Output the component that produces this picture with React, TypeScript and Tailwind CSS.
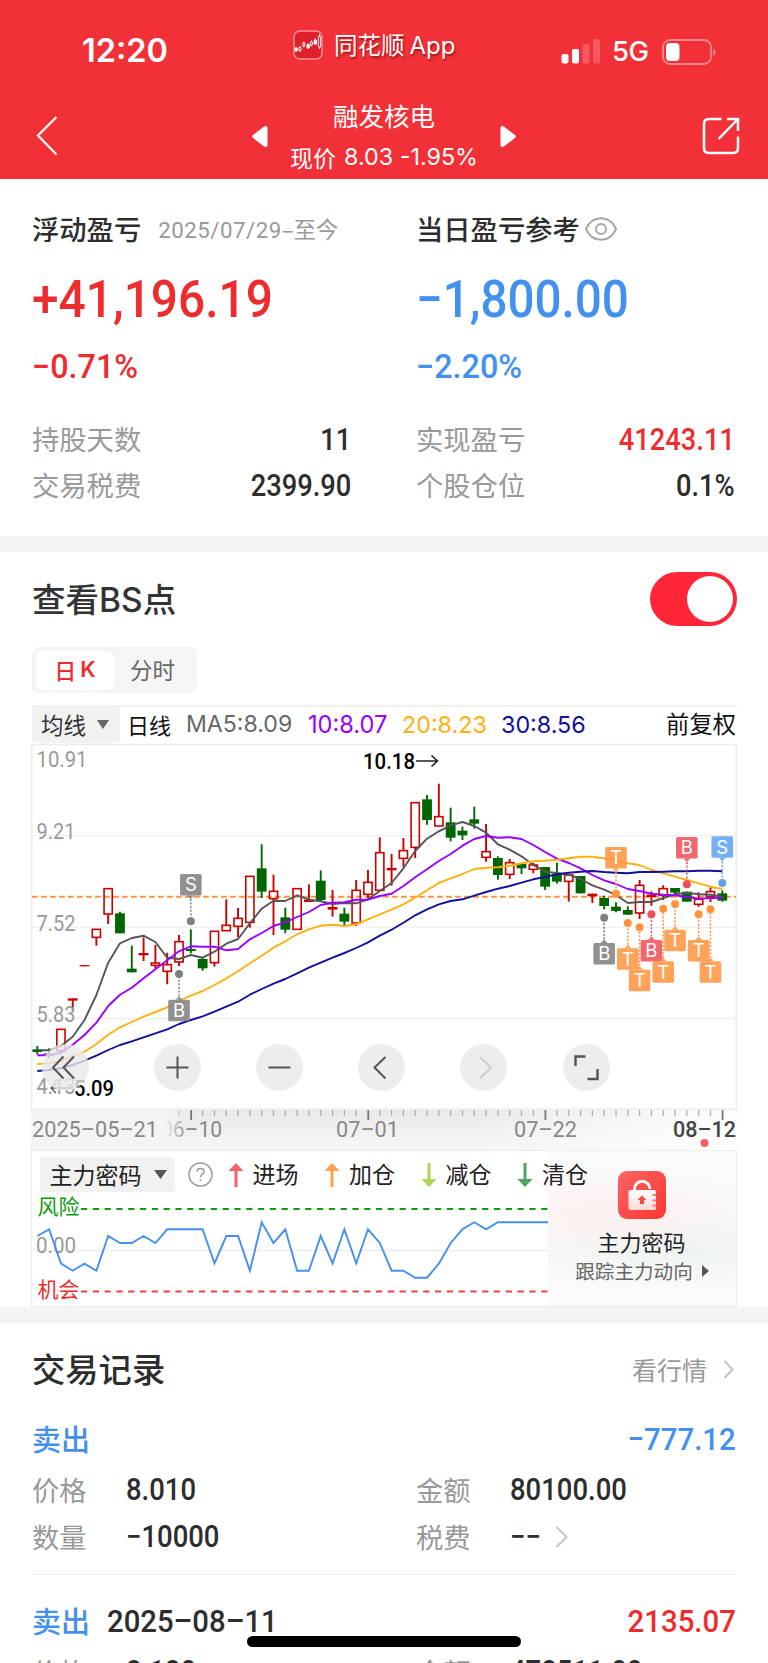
import React from "react";

type Kind = "up" | "down" | "flat";
// kind, high, body top, body bottom, low
type Candle = [Kind, number, number, number, number];

type Mark = { at: number; letter: string; box: number; dot: number; color: string };

const STEP = 11.81;
const cx = (i: number) => 6.3 + i * STEP;
const cy = (v: number) => v / 3 - 3;

const candles: Candle[] = [
  ["down", 918, 928, 936, 943], ["down", 925, 940, 948, 955], ["up", 868, 868, 932, 935],
  ["flat", 775, 775, 782, 812], ["flat", 675, 675, 679, 679], ["up", 568, 568, 592, 617],
  ["up", 446, 446, 522, 552], ["down", 515, 520, 580, 580], ["down", 617, 686, 697, 697],
  ["flat", 592, 639, 646, 663], ["up", 615, 669, 676, 685], ["up", 638, 674, 694, 733],
  ["up", 585, 605, 666, 678], ["down", 568, 627, 633, 640], ["down", 652, 657, 685, 692],
  ["up", 574, 574, 668, 680], ["up", 478, 556, 572, 572], ["up", 504, 535, 559, 592],
  ["up", 409, 409, 547, 563], ["down", 313, 385, 455, 474], ["up", 404, 454, 476, 585],
  ["down", 503, 532, 569, 580], ["up", 446, 446, 568, 568], ["flat", 433, 479, 486, 486],
  ["down", 391, 422, 480, 485], ["flat", 450, 501, 509, 530], ["down", 503, 521, 545, 557],
  ["up", 420, 451, 549, 558], ["up", 390, 427, 463, 475], ["up", 292, 338, 451, 451],
  ["flat", 342, 384, 391, 437], ["up", 294, 332, 355, 380], ["up", 188, 188, 322, 354],
  ["down", 165, 178, 240, 254], ["up", 131, 230, 258, 258], ["down", 203, 247, 293, 304],
  ["down", 260, 272, 286, 300], ["down", 200, 238, 251, 266], ["up", 252, 335, 352, 365],
  ["down", 349, 354, 405, 419], ["up", 357, 368, 403, 417], ["down", 369, 371, 385, 402],
  ["up", 368, 375, 388, 400], ["down", 381, 381, 440, 450], ["down", 368, 401, 425, 431],
  ["up", 405, 405, 424, 485], ["down", 408, 408, 460, 460], ["flat", 461, 461, 469, 489],
  ["down", 467, 474, 498, 508], ["down", 487, 500, 513, 517], ["down", 499, 510, 524, 524],
  ["up", 420, 436, 519, 537], ["flat", 454, 464, 471, 497], ["up", 436, 446, 466, 480],
  ["down", 444, 444, 458, 465], ["down", 455, 455, 485, 485], ["up", 457, 478, 493, 500],
  ["up", 442, 455, 470, 486], ["down", 451, 460, 482, 485],
];

const averages = [
  {
    color: "#555555",
    data: [931, 931, 918, 890, 840, 765, 668, 610, 594, 587, 606, 653, 657, 645, 653, 635, 611, 597, 550, 506, 482, 483, 466, 479, 484, 492, 489, 490, 478, 453, 429, 385, 333, 296, 274, 256, 246, 258, 278, 313, 329, 349, 375, 395, 399, 404, 417, 436, 449, 465, 489, 486, 486, 474, 463, 458, 463, 464, 470],
  },
  {
    color: "#9900ff",
    data: [946, 946, 938, 914, 885, 848, 798, 764, 743, 715, 688, 661, 634, 619, 620, 620, 631, 627, 598, 579, 558, 547, 531, 516, 495, 488, 487, 479, 479, 468, 461, 438, 412, 388, 363, 342, 317, 297, 288, 293, 292, 297, 315, 336, 356, 369, 385, 405, 421, 432, 447, 453, 461, 464, 466, 471, 476, 474, 474],
  },
  {
    color: "#ffb010",
    data: [972, 970, 962, 950, 935, 912, 884, 862, 846, 830, 816, 802, 783, 767, 753, 735, 715, 694, 670, 647, 623, 604, 583, 568, 557, 554, 558, 553, 538, 523, 509, 493, 473, 451, 429, 415, 402, 387, 383, 382, 377, 370, 364, 362, 359, 355, 350, 350, 355, 362, 370, 375, 390, 400, 410, 420, 430, 440, 447],
  },
  {
    color: "#10109c",
    data: [993, 990, 985, 975, 962, 947, 930, 915, 904, 892, 880, 868, 852, 840, 829, 815, 800, 785, 764, 747, 731, 717, 700, 683, 668, 653, 639, 624, 607, 587, 569, 548, 526, 508, 493, 483, 478, 467, 456, 446, 438, 428, 418, 411, 403, 398, 395, 393, 396, 398, 400, 396, 396, 395, 394, 394, 392, 392, 394],
  },
];

const marks: Mark[] = [
  { at: 13, letter: "S", box: 402, dot: 544, color: "#808080" },
  { at: 12, letter: "B", box: 779, dot: 702, color: "#808080" },
  { at: 49, letter: "T", box: 321, dot: 461, color: "#ff9440" },
  { at: 55, letter: "B", box: 291, dot: 433, color: "#ee4f58" },
  { at: 58, letter: "S", box: 289, dot: 429, color: "#60a2f0" },
  { at: 48, letter: "B", box: 609, dot: 533, color: "#808080" },
  { at: 50, letter: "T", box: 625, dot: 549, color: "#ff9440" },
  { at: 51, letter: "T", box: 689, dot: 562, color: "#ff9440" },
  { at: 52, letter: "B", box: 600, dot: 523, color: "#ee4f58" },
  { at: 53, letter: "T", box: 664, dot: 506, color: "#ff9440" },
  { at: 54, letter: "T", box: 569, dot: 492, color: "#ff9440" },
  { at: 56, letter: "T", box: 600, dot: 523, color: "#ff9440" },
  { at: 57, letter: "T", box: 664, dot: 508, color: "#ff9440" },
];

const power = [
  438, 418, 520, 542, 521, 542, 438, 459, 459, 438, 459, 418, 418, 418, 418, 520, 438, 438, 542, 397, 459, 418,
  542, 542, 438, 520, 418, 520, 418, 459, 542, 542, 563, 563, 521, 459, 418, 397, 418, 397, 397, 397, 397, 397,
];

const toPoints = (data: number[], offset = 3) =>
  data.map((v, i) => `${cx(i).toFixed(1)},${(v / 3 - offset).toFixed(1)}`).join(" ");

const StatusBar = () => (
  <div className="grid h-[97px] grid-cols-[293px_268px_1fr] items-center pt-[7px]">
    <span className="-mt-[2px] pl-[82px] font-[Inter] text-[32.500px] leading-none font-semibold">12:20</span>
    <div className="-mt-[14px] flex items-center gap-[11px]">
      <svg width="30" height="30" viewBox="0 0 30 30" fill="none">
        <rect x="1" y="1" width="28" height="28" rx="6" fill="#e0202a" stroke="#fa9298" strokeWidth="1.4" />
        <g stroke="#fff" strokeWidth="0.9">
          <path d="M3 17v4.500M7 16v6M10.800 11.500v6M15 13.500v5.500M18.500 10.500v6M22 8.500v6.500M26.500 4v15" />
          <path d="M2 18h2.200v3H2zM14 14.500h2.300v3.500H14zM21.200 10h2.300v4h-2.300z" fill="#fff" />
          <path d="M6 17.500h2v3H6zM9.900 13h2v3h-2zM17.500 12h2v3h-2zM25.400 6.500h2.200v10.500h-2.200z" fill="#e0202a" />
        </g>
      </svg>
      <span className="text-[23.500px] leading-none whitespace-nowrap [text-shadow:1px_2px_2px_rgba(90,0,0,0.55)]">
        同花顺<span className="pl-[5px] font-[Inter] text-[24px]">App</span>
      </span>
    </div>
    <div className="-mt-[1px] flex items-center">
      <svg width="40" height="25" viewBox="0 0 40 25" fill="#fff">
        <rect x="0.500" y="15" width="7" height="9.500" rx="2" />
        <rect x="11" y="10" width="7" height="14.500" rx="2" />
        <rect x="21.500" y="5" width="7" height="19.500" rx="2" opacity="0.2" />
        <rect x="32" y="0" width="7" height="24.500" rx="2" opacity="0.2" />
      </svg>
      <span className="w-[49px] pl-[11px] font-[Inter] text-[27.500px] leading-none font-medium tracking-[-0.5px]">5G</span>
      <svg className="ml-[12px]" width="56" height="26" viewBox="0 0 56 26">
        <rect x="1" y="1" width="48" height="24" rx="7" fill="none" stroke="#fff" strokeWidth="1.800" opacity="0.42" />
        <rect x="4" y="4" width="13.500" height="18" rx="4" fill="#fff" />
        <path d="M51.500 9.500q4 3.500 0 8z" fill="#fff" opacity="0.5" />
      </svg>
    </div>
  </div>
);

const NavBar = () => (
  <div className="flex h-[82px] items-center pb-[4px]">
    <div className="w-[252px] pl-[35px]">
      <svg width="24" height="42" viewBox="0 0 24 42" fill="none" stroke="#fff" strokeWidth="2.200">
        <path d="M21.500 2 3 20.500 21.500 39.500" />
      </svg>
    </div>
    <svg width="16" height="23" viewBox="0 0 16 23" fill="#fff">
      <path d="M1 10 12.500 1.300Q15.500 0 15.500 3v17q0 3-3 1.700L1 13q-1.500-1.500 0-3z" />
    </svg>
    <div className="w-[232px] text-center">
      <div className="flex h-[40px] items-center justify-center text-[25.500px] leading-none">融发核电</div>
      <div className="flex h-[42px] items-center justify-center pt-[2px] text-[23px] leading-none whitespace-nowrap">
        现价<span className="pl-[8px] font-[Inter] text-[23.300px]">8.03 -1.95%</span>
      </div>
    </div>
    <svg width="16" height="23" viewBox="0 0 16 23" fill="#fff">
      <path d="M15 10 3.500 1.300Q.5 0 .5 3v17q0 3 3 1.700L15 13q1.500-1.500 0-3z" />
    </svg>
    <svg className="mr-[28px] ml-auto" width="38" height="38" viewBox="0 0 38 38" fill="none" stroke="#fff" strokeWidth="2.500">
      <path d="M19.500 2H7Q2 2 2 7v24q0 5 5 5h24q5 0 5-5V19.500M25 2h11v12M36 2 16.500 22" />
    </svg>
  </div>
);

const Row = ({ label, value, red }: { label: string; value: string; red?: boolean }) => (
  <div className="flex h-[46px] items-center justify-between">
    <span className="-mt-[3px] text-[27.300px] leading-none text-[#999]">{label}</span>
    <span
      className={`-mt-[1px] origin-right scale-x-[0.88] font-[Roboto] text-[31px] leading-none font-medium ${
        red ? "text-[#ee2c2e]" : "text-[#2d2d2d]"
      }`}
    >
      {value}
    </span>
  </div>
);

const Summary = () => (
  <section className="grid h-[357px] grid-cols-[319px_319px] gap-x-[65px] px-8 pt-[28px]">
    <div>
      <div className="-mt-[1px] flex h-[46px] items-center gap-[17px] whitespace-nowrap">
        <span className="text-[27.300px] leading-none font-medium text-[#2d2d2d]">浮动盈亏</span>
        <span className="text-[22.300px] leading-none text-[#999]">
          <span className="font-[Roboto] tracking-[0.500px]">2025/07/29</span>–至今
        </span>
      </div>
      <div className="mt-[21px] flex h-[54px] items-center">
        <span className="origin-left scale-x-[0.92] font-[Roboto] text-[52px] leading-none font-medium text-[#ee2c2e]">+41,196.19</span>
      </div>
      <div className="mt-[19px] flex h-[40px] items-center">
        <span className="origin-left scale-x-[0.98] font-[Roboto] text-[33px] leading-none font-medium text-[#ee2c2e]">−0.71%</span>
      </div>
      <div className="mt-[31px]">
        <Row label="持股天数" value="11" />
        <Row label="交易税费" value="2399.90" />
      </div>
    </div>
    <div>
      <div className="-mt-[1px] flex h-[46px] items-center gap-[5px] whitespace-nowrap">
        <span className="text-[27.300px] leading-none font-medium text-[#2d2d2d]">当日盈亏参考</span>
        <svg width="32" height="24" viewBox="0 0 32 24" fill="none" stroke="#a8a8a8" strokeWidth="2">
          <path d="M1 12C4 5 9.500 1.200 16 1.200S28 5 31 12c-3 7-8.500 10.800-15 10.800S4 19 1 12z" />
          <circle cx="16" cy="12" r="5" />
        </svg>
      </div>
      <div className="mt-[21px] flex h-[54px] items-center">
        <span className="origin-left scale-x-[0.915] font-[Roboto] text-[52px] leading-none font-medium text-[#4490ef]">−1,800.00</span>
      </div>
      <div className="mt-[19px] flex h-[40px] items-center">
        <span className="origin-left scale-x-[0.98] font-[Roboto] text-[33px] leading-none font-medium text-[#4490ef]">−2.20%</span>
      </div>
      <div className="mt-[31px]">
        <Row label="实现盈亏" value="41243.11" red />
        <Row label="个股仓位" value="0.1%" />
      </div>
    </div>
  </section>
);

const MarkTag = ({ m }: { m: Mark }) => {
  const x = cx(m.at);
  const top = cy(m.box);
  const dot = cy(m.dot);
  const above = m.box < m.dot;
  const edge = above ? top + 21.5 : top;
  const tip = above ? edge + 3.5 : edge - 3.5;
  return (
    <g>
      <line x1={x} x2={x} y1={tip} y2={dot} stroke={m.color} strokeWidth="1.5" strokeDasharray="2 1.6" />
      <circle cx={x} cy={dot} r="4" fill={m.color} />
      <g opacity="0.86">
        <rect x={x - 10.8} y={top} width="21.600" height="21.500" rx="1.500" fill={m.color} />
        <path d={`M${x - 3.5} ${edge}L${x} ${tip}L${x + 3.5} ${edge}z`} fill={m.color} />
      </g>
      <text x={x} y={top + 17.2} textAnchor="middle" fontSize="18.500" fill="#fff" className="font-[Inter]">
        {m.letter}
      </text>
    </g>
  );
};

const AxisLabel = ({ y, text, width = 39 }: { y: number; text: string; width?: number }) => (
  <text x="5.500" y={y} fontSize="22.500" fill="#999" textLength={width} lengthAdjust="spacingAndGlyphs" className="font-[Roboto]">
    {text}
  </text>
);

const KLine = () => (
  <svg className="block" width="706" height="367" viewBox="0 0 706 367" fill="none">
    <rect x="0.750" y="1.500" width="704.500" height="364.500" stroke="#ececec" strokeWidth="1.500" />
    <path d="M1 92.700H705M1 184.200H705M1 275.500H705" stroke="#eeeeee" strokeWidth="1.300" />
    <path d="M1 153.700H705" stroke="#ff9440" strokeWidth="2" strokeDasharray="5.800 3.200" />
    {candles.map(([kind, high, top, bottom, low], i) => {
      const x = cx(i);
      const color = kind === "down" ? "#006600" : "#cc0000";
      if (kind === "up") {
        return (
          <g key={i} stroke={color} strokeWidth="1.600">
            <path d={`M${x} ${cy(high)}V${cy(top)}M${x} ${cy(bottom)}V${cy(low)}`} strokeWidth="1.900" />
            <rect x={x - 4.1} y={cy(top)} width="8.200" height={(bottom - top) / 3} />
          </g>
        );
      }
      return (
        <g key={i}>
          <path d={`M${x} ${cy(high)}V${cy(low)}`} stroke={color} strokeWidth="1.900" />
          <rect x={x - 4.9} y={cy(top)} width="9.800" height={(bottom - top) / 3} fill={color} />
        </g>
      );
    })}
    {averages.map((ma) => (
      <polyline key={ma.color} points={toPoints(ma.data)} stroke={ma.color} strokeWidth="1.900" strokeLinejoin="round" />
    ))}
    <AxisLabel y={24} text="10.91" width={51} />
    <AxisLabel y={96} text="9.21" />
    <AxisLabel y={187.5} text="7.52" />
    <AxisLabel y={278.5} text="5.83" />
    <AxisLabel y={351} text="4.13" />
    <text x="332" y="25.500" fontSize="22.500" fill="#000" textLength="52" lengthAdjust="spacingAndGlyphs" className="font-[Roboto] font-medium">
      10.18
    </text>
    <path d="M385 18H406M400.500 12.500 406.500 18 400.500 23.500" stroke="#222" strokeWidth="1.600" />
    <text x="43" y="352.500" fontSize="22.500" fill="#000" textLength="40" lengthAdjust="spacingAndGlyphs" className="font-[Roboto] font-medium">
      5.09
    </text>
    <path d="M41 345H20M25 340 20 345 25 350" stroke="#555" strokeWidth="1.300" />
    {marks.map((m, i) => (
      <MarkTag key={i} m={m} />
    ))}
  </svg>
);

const Round = ({ d, faded, thick }: { d: string; faded?: boolean; thick?: boolean }) => (
  <button className="size-[47px] rounded-full bg-[#e8e8e8]/80">
    <svg width="47" height="47" viewBox="0 0 47 47" fill="none" stroke={faded ? "#cccccc" : "#555555"} strokeWidth={thick ? 2.4 : 2}>
      <path d={d} />
    </svg>
  </button>
);

const DateAxis = () => (
  <svg className="block" width="706" height="40" viewBox="0 0 706 40">
    <defs>
      <linearGradient id="axisFade" x1="0" x2="0" y1="0" y2="1">
        <stop offset="0" stopColor="#e9e9e9" />
        <stop offset="0.8" stopColor="#f4f4f4" />
      </linearGradient>
      <linearGradient id="axisRight" x1="0" x2="1" y1="0" y2="0">
        <stop offset="0" stopColor="#fff" stopOpacity="0" />
        <stop offset="1" stopColor="#fff" stopOpacity="0.9" />
      </linearGradient>
      <linearGradient id="axisLeft" x1="0" x2="1" y1="0" y2="0">
        <stop offset="0.84" stopColor="#f4f4f4" />
        <stop offset="1" stopColor="#f4f4f4" stopOpacity="0" />
      </linearGradient>
    </defs>
    <rect width="706" height="40" fill="url(#axisFade)" />
    <rect x="440" width="266" height="40" fill="url(#axisRight)" />
    {candles.map((_, i) =>
      i < 11 ? null : (
        <rect
          key={i}
          x={cx(i) - 0.6}
          y="0"
          width={i % 15 === 13 ? 1.8 : 1.2}
          height={i % 15 === 13 ? 10 : 6}
          fill={i % 15 === 13 ? "#777" : "#aaa"}
        />
      ),
    )}
    <g fontSize="22.500" fill="#888" className="font-[Roboto]">
      <text x="130" y="26.500" textLength="61" lengthAdjust="spacingAndGlyphs">06–10</text>
      <rect width="158" height="40" fill="url(#axisLeft)" />
      <text x="1" y="27" textLength="126" lengthAdjust="spacingAndGlyphs">2025–05–21</text>
      <text x="305" y="26.500" textLength="63" lengthAdjust="spacingAndGlyphs">07–01</text>
      <text x="483" y="26.500" textLength="63" lengthAdjust="spacingAndGlyphs">07–22</text>
      <text x="642" y="26.500" fill="#444" textLength="63" lengthAdjust="spacingAndGlyphs" className="font-medium">08–12</text>
    </g>
    <circle cx="673.500" cy="33" r="4" fill="#f45c60" />
  </svg>
);

const Signal = ({ label, color, down }: { label: string; color: string; down?: boolean }) => (
  <div className="flex w-[96.500px] items-center gap-[9px]">
    <svg className={down ? "rotate-180" : ""} width="16" height="24" viewBox="0 0 16 24" fill={color}>
      <path d="M8 0 15.500 8H9.500V24h-3V8H.5z" />
    </svg>
    <span className="-mt-[2px] text-[23px] leading-none text-[#222]">{label}</span>
  </div>
);

const Indicator = () => (
  <div className="relative h-[157px] w-[706px] border-[1.500px] border-[#ececec] bg-white">
    <div className="flex h-full justify-between">
      <svg className="block" width="516" height="154" viewBox="1 1 516 154" fill="none">
        <path d="M1 100.500H517" stroke="#ededed" strokeWidth="1.300" />
        <path d="M50 59H517" stroke="#0c9c0c" strokeWidth="2" strokeDasharray="6.200 5.600" />
        <path d="M50 141.500H517" stroke="#e84444" strokeWidth="2" strokeDasharray="6.200 5.600" />
        <text x="6.500" y="64" fontSize="21" fill="#0c9c0c">风险</text>
        <text x="6.500" y="146.500" fontSize="21" fill="#ee2c2e">机会</text>
        <text x="5" y="103" fontSize="22" fill="#999" textLength="40" lengthAdjust="spacingAndGlyphs" className="font-[Roboto]">0.00</text>
        <polyline points={`${toPoints(power, 60)} 517,72.3`} stroke="#4490ef" strokeWidth="1.900" />
      </svg>
      <div className="flex w-[188px] flex-col items-center bg-[#fafafa] bg-[radial-gradient(ellipse_90%_28%_at_30%_40%,#fdefef_0,transparent_100%),radial-gradient(ellipse_110%_28%_at_70%_62%,#edf3f1_0,transparent_100%)] pt-[20px] pr-[1px]">
        <svg width="48" height="48" viewBox="0 0 48 48">
          <defs>
            <linearGradient id="lockBg" x1="0" y1="0" x2="1" y2="1">
              <stop offset="0" stopColor="#ff6462" />
              <stop offset="1" stopColor="#fa3732" />
            </linearGradient>
            <linearGradient id="lockBody" x1="0" y1="0" x2="0" y2="1">
              <stop offset="0" stopColor="#fff" />
              <stop offset="1" stopColor="#ffd9d6" />
            </linearGradient>
          </defs>
          <rect width="48" height="48" rx="9" fill="url(#lockBg)" />
          <path d="M16.500 20v-2a7.700 7.700 0 0 1 15.400 0" fill="none" stroke="#fff" strokeWidth="3" />
          <rect x="10.500" y="19" width="27.500" height="20" rx="2" fill="url(#lockBody)" />
          <path d="M24 24.500 28.500 29H26v4h-4v-4h-2.500z" fill="#f84a45" />
          <path d="M34.500 24H38M34.500 29.500H38M34.500 34.500H38" stroke="#fa7a76" strokeWidth="2" />
        </svg>
        <span className="mt-[11px] text-[22px] leading-none text-[#222]">主力密码</span>
        <span className="mt-[9px] flex items-center gap-[9px] pl-[1px] text-[19.600px] leading-none whitespace-nowrap text-[#666]">
          跟踪主力动向
          <svg width="7" height="12" viewBox="0 0 7 12" fill="#555">
            <path d="M0 0 7 6 0 12z" />
          </svg>
        </span>
      </div>
    </div>
    <div className="absolute top-[6px] left-[7.500px] flex items-center whitespace-nowrap">
      <div className="flex h-[35px] w-[135px] items-center gap-[12px] rounded-[4px] bg-[#f1f1f1] pl-[10px]">
        <span className="-mt-[1px] text-[23px] leading-none text-[#222]">主力密码</span>
        <svg width="13" height="10" viewBox="0 0 13 10" fill="#555">
          <path d="M0 0h13L6.500 9z" />
        </svg>
      </div>
      <svg className="mr-[15px] ml-[13px]" width="25" height="25" viewBox="0 0 25 25" fill="none" stroke="#999" strokeWidth="1.500">
        <circle cx="12.500" cy="12.500" r="11.500" />
        <path d="M9 9.800Q9 6.500 12.500 6.500T16 9.800C16 12 12.500 12.200 12.500 15.300M12.500 17.200v1.900" />
      </svg>
      <Signal label="进场" color="#f46468" />
      <Signal label="加仓" color="#ffa04e" />
      <Signal label="减仓" color="#acd650" down />
      <Signal label="清仓" color="#4fa45e" down />
    </div>
  </div>
);

const ChartSection = () => (
  <section className="h-[755px] px-[31px] pt-[20px]">
    <div className="flex h-[54px] items-center justify-between">
      <span className="pl-[1px] text-[33.500px] leading-none font-medium text-[#333]">
        查看<span className="font-[Inter] text-[33.500px]">BS</span>点
      </span>
      <div className="flex h-[54px] w-[87px] items-center justify-end rounded-full bg-[#ff2638] pr-[4px]">
        <div className="size-[46px] rounded-full bg-white" />
      </div>
    </div>
    <div className="mt-[21px] ml-[1px] flex h-[46px] w-[165px] items-center rounded-[7px] bg-[#f5f5f5] p-[4px]">
      <div className="flex h-[39px] w-[78px] items-center justify-center rounded-[6px] bg-white pb-[2px] text-[22px] leading-none font-medium text-[#ee2c2e]">
        日<span className="pl-[4px] font-[Inter] text-[22px] font-semibold">K</span>
      </div>
      <div className="flex-1 pr-[2px] pb-[2px] text-center text-[22.500px] leading-none text-[#666]">分时</div>
    </div>
    <div className="mt-[12px] ml-[1px] flex h-[38px] items-center border-t-[2px] border-[#f1f1f1] text-[22.500px] leading-none whitespace-nowrap text-[#111]">
      <div className="flex h-[36px] w-[88px] shrink-0 items-center gap-[11px] rounded-[4px] bg-[#f1f1f1] pb-[1px] pl-[9px] text-[#333]">
        均线
        <svg width="12" height="9" viewBox="0 0 12 9" fill="#666">
          <path d="M0 0h12L6 9z" />
        </svg>
      </div>
      <span className="w-[66px] pb-[2px] pl-[7px] text-[22px]">日线</span>
      <span className="w-[122px] font-[Inter] text-[23.100px] text-[#666]">MA5:8.09</span>
      <span className="w-[94px] font-[Inter] text-[23.600px] text-[#9900ff]">10:8.07</span>
      <span className="w-[99px] font-[Inter] text-[23.300px] text-[#ffb010]">20:8.23</span>
      <span className="font-[Inter] text-[23.300px] text-[#10109c]">30:8.56</span>
      <span className="ml-auto pr-[1px] pb-[2px] text-[23.300px]">前复权</span>
    </div>
    <div className="relative">
      <KLine />
      <div className="absolute top-[300.500px] left-[10.500px] flex">
        <div className="w-[112px]"><Round d="M21.500 12.500 11 23.500 21.500 34.500M32 12.500 21.500 23.500 32 34.500" /></div>
        <div className="w-[102px]"><Round d="M12.500 23.500H34.500M23.500 12.500V34.500" /></div>
        <div className="w-[102.500px]"><Round d="M12.500 23.500H34.500" /></div>
        <div className="w-[102px]"><Round d="M27.500 13 16.500 23.500 27.500 34.500" /></div>
        <div className="w-[102.500px]"><Round d="M20 13 31 23.500 20 34.500" faded /></div>
        <Round d="M12.500 22V12.500H22.500M34.500 25V35H24.500" thick />
      </div>
    </div>
    <DateAxis />
    <Indicator />
  </section>
);

const Chevron = ({ className }: { className?: string }) => (
  <svg className={className} width="13" height="22" viewBox="0 0 13 22" fill="none" stroke="#c4c4c4" strokeWidth="2">
    <path d="M1.500 1 11.500 11 1.500 21" />
  </svg>
);

const Cell = ({ label, value, more }: { label: string; value: string; more?: boolean }) => (
  <div className="flex h-[47px] items-center">
    <span className="-mt-[2px] w-[94px] text-[27.300px] leading-none text-[#999]">{label}</span>
    <span className="origin-left scale-x-[0.9] font-[Roboto] text-[30.500px] leading-none font-medium text-[#2d2d2d]">{value}</span>
    {more && <Chevron className="-mt-[2px] ml-[11px]" />}
  </div>
);

type TradeProps = { date?: string; amount: string; gain?: boolean; cells: [string, string, boolean?][] };

const Trade = ({ date, amount, gain, cells }: TradeProps) => (
  <div>
    <div className="flex h-[56px] items-center">
      <span className="-mt-[2px] w-[75px] text-[29px] leading-none font-medium text-[#4490ef]">卖出</span>
      <span className="origin-left scale-x-[0.915] font-[Roboto] text-[32px] leading-none font-medium text-[#2d2d2d]">{date}</span>
      <span
        className={`-mt-[1px] ml-auto origin-right scale-x-[0.92] font-[Roboto] text-[32px] leading-none font-medium ${
          gain ? "text-[#ee2c2e]" : "text-[#4490ef]"
        }`}
      >
        {amount}
      </span>
    </div>
    <div className="grid grid-cols-[384px_1fr]">
      {cells.map(([label, value, more]) => (
        <Cell key={label} label={label} value={value} more={more} />
      ))}
    </div>
  </div>
);

const Records = () => (
  <section className="relative h-[340px] overflow-hidden px-8 pt-[20px]">
    <div className="-mt-[1px] flex h-[54px] items-center justify-between">
      <span className="-mt-[2px] text-[33.300px] leading-none font-medium text-[#2d2d2d]">交易记录</span>
      <span className="flex items-center gap-[16px] text-[25px] leading-none text-[#999]">
        看行情
        <svg className="mr-[2px]" width="11" height="19" viewBox="0 0 11 19" fill="none" stroke="#c4c4c4" strokeWidth="2">
          <path d="M1.500 1 9.500 9.500 1.500 18" />
        </svg>
      </span>
    </div>
    <div className="mt-[15px] h-[164px] border-b border-[#eeeeee]">
      <Trade
        amount="−777.12"
        cells={[["价格", "8.010"], ["金额", "80100.00"], ["数量", "−10000"], ["税费", "−−", true]]}
      />
    </div>
    <div className="mt-[18px]">
      <Trade date="2025–08–11" amount="2135.07" gain cells={[["价格", "8.180"], ["金额", "478511.00"]]} />
    </div>
    {/* home indicator */}
    <div className="absolute bottom-[16px] left-[247px] h-[11px] w-[274px] rounded-full bg-black" />
  </section>
);

const App: React.FC = () => {
  return (
    <main className="h-[1663px] w-[768px] overflow-hidden bg-white font-['Noto_Sans_CJK_SC',sans-serif]">
      <header className="h-[179px] bg-[#f23038] text-white">
        <StatusBar />
        <NavBar />
      </header>
      <Summary />
      <div className="h-[16px] bg-[#f4f4f4]" />
      <ChartSection />
      <div className="h-[16px] bg-[#f4f4f4]" />
      <Records />
    </main>
  );
};

export default App;
